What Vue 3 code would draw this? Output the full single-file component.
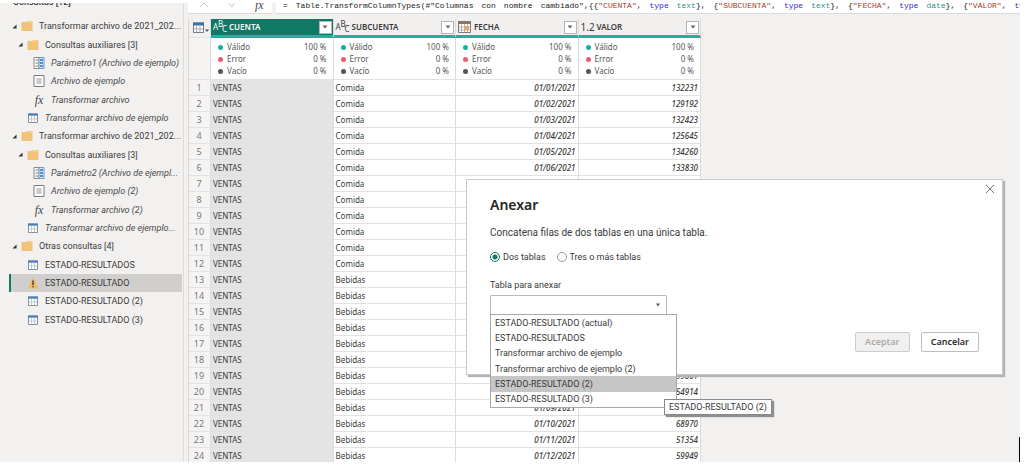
<script setup>
import { ref } from 'vue'

const queries = [
  { kind: 'folder', level: 0, label: 'Transformar archivo de 2021_202...' },
  { kind: 'folder', level: 1, label: 'Consultas auxiliares [3]' },
  { kind: 'param', level: 2, label: 'Parámetro1 (Archivo de ejemplo)', italic: true },
  { kind: 'file', level: 2, label: 'Archivo de ejemplo', italic: true },
  { kind: 'fx', level: 2, label: 'Transformar archivo', italic: true },
  { kind: 'table', level: 1, label: 'Transformar archivo de ejemplo', italic: true },
  { kind: 'folder', level: 0, label: 'Transformar archivo de 2021_202...' },
  { kind: 'folder', level: 1, label: 'Consultas auxiliares [3]' },
  { kind: 'param', level: 2, label: 'Parámetro2 (Archivo de ejempl...', italic: true },
  { kind: 'file', level: 2, label: 'Archivo de ejemplo (2)', italic: true },
  { kind: 'fx', level: 2, label: 'Transformar archivo (2)', italic: true },
  { kind: 'table', level: 1, label: 'Transformar archivo de ejemplo...', italic: true },
  { kind: 'folder', level: 0, label: 'Otras consultas [4]' },
  { kind: 'table', level: 1, label: 'ESTADO-RESULTADOS' },
  { kind: 'warn', level: 1, label: 'ESTADO-RESULTADO', selected: true },
  { kind: 'table', level: 1, label: 'ESTADO-RESULTADO (2)' },
  { kind: 'table', level: 1, label: 'ESTADO-RESULTADO (3)' }
]

const formula = [
  [['=', '']],
  [['Table.TransformColumnTypes(#"Columnas', '']],
  [['con', '']],
  [['nombre', '']],
  [['cambiado",{{', ''], ['"CUENTA"', 'str'], [',', '']],
  [['type', 'kw']],
  [['text', 'ty'], ['},', '']],
  [['{', ''], ['"SUBCUENTA"', 'str'], [',', '']],
  [['type', 'kw']],
  [['text', 'ty'], ['},', '']],
  [['{', ''], ['"FECHA"', 'str'], [',', '']],
  [['type', 'kw']],
  [['date', 'ty'], ['},', '']],
  [['{', ''], ['"VALOR"', 'str'], [',', '']],
  [['type', 'kw']]
]

const columns = [
  { name: 'CUENTA', type: 'abc', selected: true },
  { name: 'SUBCUENTA', type: 'abc' },
  { name: 'FECHA', type: 'date' },
  { name: 'VALOR', type: 'num' }
]

const quality = [
  { label: 'Válido', value: '100 %', tone: 'ok' },
  { label: 'Error', value: '0 %', tone: 'bad' },
  { label: 'Vacío', value: '0 %', tone: 'none' }
]

const values = {
  1: '132231', 2: '129192', 3: '132423', 4: '125645', 5: '134260', 6: '133830',
  19: '99861', 20: '54914', 22: '68970', 23: '51354', 24: '59949'
}
const rows = Array.from({ length: 24 }, (_, i) => {
  const n = i + 1
  const month = String((i % 12) + 1).padStart(2, '0')
  const date = n <= 6 || n >= 21 ? `01/${month}/2021` : ''
  return { n, sub: n <= 12 ? 'Comida' : 'Bebidas', date, value: values[n] || '' }
})

const options = [
  'ESTADO-RESULTADO (actual)',
  'ESTADO-RESULTADOS',
  'Transformar archivo de ejemplo',
  'Transformar archivo de ejemplo (2)',
  'ESTADO-RESULTADO (2)',
  'ESTADO-RESULTADO (3)'
]
const hovered = ref(4)
const mode = ref('two')
const target = ref('')
</script>

<template>
  <div class="screen">
    <div class="workspace">
      <aside class="sidebar">
        <h2 class="side-title">Consultas [12]</h2>
        <ul class="tree">
          <li
            v-for="(q, i) in queries"
            :key="i"
            class="node"
            :class="['level-' + q.level, { italic: q.italic, selected: q.selected }]"
          >
            <svg v-if="q.kind === 'folder'" class="twisty" viewBox="0 0 6 6"><path d="M5.5 0.5V5.5H0.5z" fill="#333" /></svg>
            <svg v-if="q.kind === 'folder'" class="icon" viewBox="0 0 12 12">
              <path d="M0.5 2H5l1-1h5.500V11H.5z" fill="#f0c27a" />
              <path d="M6 2h5" stroke="#f7d79c" stroke-width="1" />
            </svg>
            <svg v-else-if="q.kind === 'param'" class="icon" viewBox="0 0 12 12">
              <path d="M1 .5h5v11H1z" fill="#fff" stroke="#8a8a8a" />
              <path d="M6 .5h5v11H6z" fill="#dbe8f6" stroke="#6d98c8" />
              <path d="M2.500 3H5M2.500 6H5M2.500 9H5" stroke="#777" />
              <path d="M7 3h3M7 6h3M7 9h3" stroke="#2f6db5" stroke-width="1.500" />
            </svg>
            <svg v-else-if="q.kind === 'file'" class="icon" viewBox="0 0 12 12">
              <path d="M1 .5h10v11H1z" fill="#fff" stroke="#7c7c7c" />
              <path d="M3.500 4h5M3.500 6h5M3.500 8h5" stroke="#8b8b8b" stroke-width=".9" />
            </svg>
            <span v-else-if="q.kind === 'fx'" class="icon fx">fx</span>
            <svg v-else-if="q.kind === 'table'" class="icon" viewBox="0 0 12 12">
              <path d="M1.500 2h9v8.500h-9z" fill="#fff" stroke="#8c8c8c" />
              <path d="M4.500 4v6.500M7.500 4v6.500M1.500 7h9" stroke="#a9bfd6" stroke-width=".8" />
              <path d="M1 1.500h10v2.200H1z" fill="#4a7ebb" />
            </svg>
            <svg v-else class="icon" viewBox="0 0 12 12">
              <path d="M6 .5L11.500 11.500H.5z" fill="#f2b96a" />
              <path d="M6 3.500V8M6 9v1.300" stroke="#333" stroke-width="1.300" />
            </svg>
            <a class="label" href="#">{{ q.label }}</a>
          </li>
        </ul>
      </aside>

      <main class="main">
        <div class="formula-bar">
          <div class="formula-tools">
            <svg viewBox="0 0 10 10"><path d="M1 1l8 8M9 1L1 9" fill="none" stroke="#c6c6c6" /></svg>
            <svg viewBox="0 0 10 10"><path d="M1 4l4 5L9 2" fill="none" stroke="#c6c6c6" /></svg>
            <span class="fx">fx</span>
          </div>
          <code class="formula">
            <span v-for="(word, i) in formula" :key="i"><span v-for="(t, j) in word" :key="j" :class="t[1]">{{ t[0] }}</span></span>
          </code>
        </div>

        <table class="grid">
          <colgroup>
            <col class="col-n" />
            <col v-for="c in columns" :key="c.name" class="col-data" />
          </colgroup>
          <thead>
            <tr class="head">
              <th class="corner">
                <button type="button" class="corner-btn" aria-label="Opciones de tabla">
                  <svg viewBox="0 0 16 12">
                    <path d="M.5 1h10v9.500H.5z" fill="#fff" stroke="#777" />
                    <path d="M3.500 4v6.500M7 4v6.500M.5 7h10" stroke="#999" stroke-width=".8" />
                    <path d="M0 .5h11v3H0z" fill="#3f6fae" />
                    <path d="M12 7.500h4l-2 2.500z" fill="#555" />
                  </svg>
                </button>
              </th>
              <th v-for="c in columns" :key="c.name" :class="{ active: c.selected }">
                <div class="head-cell">
                  <span v-if="c.type === 'abc'" class="type abc"><i>A</i><i>B</i><i>C</i></span>
                  <svg v-else-if="c.type === 'date'" class="type" viewBox="0 0 13 12">
                    <path d="M.5 .5h12v11H.5z" fill="#fff" stroke="#777" />
                    <path d="M0 0h13v3H0z" fill="#8a7668" />
                    <path d="M3.500 3v8.500M6.500 3v8.500M9.500 3v8.500M.5 6h12M.5 9h12" stroke="#999" stroke-width=".7" />
                    <path d="M7 5h4v4H7z" fill="#eda553" />
                  </svg>
                  <span v-else class="type num">1.2</span>
                  <span class="name">{{ c.name }}</span>
                  <button type="button" class="filter" :aria-label="'Filtrar ' + c.name">
                    <svg viewBox="0 0 6 4"><path d="M.5 .5h5L3 3.500z" fill="#666" /></svg>
                  </button>
                </div>
              </th>
            </tr>
            <tr class="quality">
              <td class="num-cell"></td>
              <td v-for="c in columns" :key="c.name">
                <div v-for="q in quality" :key="q.label" class="stat">
                  <span class="dot" :class="q.tone"></span><span>{{ q.label }}</span><span class="pct">{{ q.value }}</span>
                </div>
              </td>
            </tr>
          </thead>
          <tbody>
            <tr v-for="r in rows" :key="r.n">
              <td class="num-cell">{{ r.n }}</td>
              <td class="picked">VENTAS</td>
              <td>{{ r.sub }}</td>
              <td class="right">{{ r.date }}</td>
              <td class="right">{{ r.value }}</td>
            </tr>
          </tbody>
        </table>
      </main>
      <span class="caret"></span>
    </div>

    <section class="dialog" role="dialog" aria-labelledby="dlg-title">
      <button type="button" class="close" aria-label="Cerrar">
        <svg viewBox="0 0 10 10"><path d="M1 1l8 8M9 1L1 9" stroke="#777" /></svg>
      </button>
      <h1 id="dlg-title">Anexar</h1>
      <p class="desc">Concatena filas de dos tablas en una única tabla.</p>
      <div class="radios">
        <label><input v-model="mode" type="radio" name="mode" value="two" />Dos tablas</label>
        <label><input v-model="mode" type="radio" name="mode" value="many" />Tres o más tablas</label>
      </div>
      <label class="field-label" for="target">Tabla para anexar</label>
      <div class="picker">
        <select id="target" v-model="target">
          <option value=""></option>
          <option v-for="o in options" :key="o">{{ o }}</option>
        </select>
        <svg class="arrow" viewBox="0 0 6 4"><path d="M1 .5h4L3 3.500z" fill="#555" /></svg>
        <ul class="menu" role="listbox">
          <li
            v-for="(o, i) in options"
            :key="o"
            role="option"
            :class="{ hovered: i === hovered }"
            @mouseenter="hovered = i"
            @click="target = o"
          >{{ o }}</li>
        </ul>
        <span class="tooltip" role="tooltip">{{ options[4] }}</span>
      </div>
      <div class="actions">
        <button type="button" class="btn" disabled>Aceptar</button>
        <button type="button" class="btn">Cancelar</button>
      </div>
    </section>
  </div>
</template>

<style>
body {
  background: #fff;
}
</style>

<style scoped>
* {
  box-sizing: border-box;
}
.screen {
  position: relative;
  height: 100vh;
  overflow: hidden;
  padding: 3px 4px 2px 0;
  font: 9px/12px Roboto, "Noto Sans", sans-serif;
  color: #3a3a3a;
}
ul,
h1,
h2,
p {
  margin: 0;
  padding: 0;
  list-style: none;
}
button {
  font: inherit;
  padding: 0;
  cursor: pointer;
}
.workspace {
  position: relative;
  display: flex;
  height: 100%;
  overflow: hidden;
  background: #f3f1f0;
}
.sidebar {
  flex: none;
  width: 184px;
  border-right: 1px solid #dedcdb;
}
.side-title {
  height: 14px;
  margin-top: -7px;
  padding-left: 13px;
  font-size: 9px;
  line-height: 12px;
  font-weight: 500;
}
.tree {
  display: grid;
  grid-auto-rows: 1fr;
  height: 312px;
  margin: 7px 1px 0 9px;
}
.node {
  display: flex;
  align-items: center;
  white-space: nowrap;
  border-left: 2px solid transparent;
}
.node.level-1 {
  padding-left: 16px;
}
.node.level-2 {
  padding-left: 22px;
}
.node:has(.twisty) {
  padding-left: 1px;
}
.node.level-1:has(.twisty) {
  padding-left: 7px;
}
.node.selected {
  background: #d0cfce;
  border-left-color: #0f7b63;
}
.twisty {
  width: 5px;
  height: 5px;
  margin-right: 4px;
}
.icon {
  flex: none;
  width: 12px;
  height: 12px;
  margin-right: 6px;
}
.fx {
  font: italic 12px/12px "Liberation Serif", serif;
  text-align: center;
  color: #444;
}
.label {
  color: inherit;
  text-decoration: none;
}
.italic .label {
  font-style: italic;
  color: #4a4a4a;
}
.main {
  flex: 1;
  min-width: 0;
  padding-left: 4px;
}
.formula-bar {
  display: flex;
  gap: 4px;
  height: 11px;
  margin-bottom: 5px;
}
.formula-tools {
  display: flex;
  flex: none;
  gap: 18px;
  width: 84px;
  padding-left: 11px;
  background: #fff;
  border-bottom: 1px solid #dedcdb;
}
.formula-tools svg {
  width: 10px;
  height: 10px;
  margin-top: -5px;
}
.formula-tools .fx {
  margin-top: -4px;
  line-height: 12px;
}
.formula {
  display: flex;
  flex: 1;
  min-width: 0;
  gap: 8px;
  overflow: hidden;
  padding-left: 7px;
  background: #fff;
  border-bottom: 1px solid #dedcdb;
  font: 8px/8px "Liberation Mono", monospace;
  white-space: nowrap;
  color: #222;
}
.formula > span {
  margin-top: -1px;
}
.formula .str {
  color: #a33a32;
}
.formula .kw {
  color: #2a2ae0;
}
.formula .ty {
  color: #2a8f83;
}
.grid {
  table-layout: fixed;
  width: 513px;
  border-collapse: separate;
  border-spacing: 0;
  border-left: 1px solid #d8d6d5;
  font: 8px/12px "Noto Sans", sans-serif;
  background: #fff;
}
.col-n {
  width: 22px;
}
.grid th,
.grid td {
  padding: 0 3px 0 2px;
  border-right: 1px solid #dcdcdc;
  border-bottom: 1px solid #e2e2e2;
  text-align: left;
  font-weight: 400;
  white-space: nowrap;
}
.grid td {
  height: 16px;
}
.grid .head th {
  height: 19px;
  padding: 0 1px 0 2px;
  background: #f1f0ef;
  border-bottom: 3px solid #1fb0a0;
}
.grid .head .corner {
  border-bottom: 1px solid #e2e2e2;
}
.grid .head .active {
  background: #117865;
  color: #fff;
}
.corner-btn {
  display: block;
  width: 16px;
  height: 12px;
  margin-left: 2px;
  border: 0;
  background: none;
}
.corner-btn svg {
  display: block;
  width: 16px;
  height: 12px;
}
.head-cell {
  display: flex;
  align-items: center;
  height: 16px;
}
.type {
  flex: none;
  width: 13px;
  height: 12px;
  margin-right: 3px;
}
.abc {
  display: flex;
  align-items: center;
  font-size: 8px;
  line-height: 8px;
}
.abc i {
  flex: none;
  width: 4px;
  font-style: normal;
}
.abc i:first-child {
  width: 5px;
}
.abc i:nth-child(2) {
  align-self: flex-start;
  margin-top: -1px;
}
.abc i:nth-child(3) {
  align-self: flex-end;
}
.num {
  font-size: 10px;
  line-height: 12px;
}
.name {
  font-weight: 600;
}
.filter {
  display: grid;
  place-items: center;
  width: 13px;
  height: 13px;
  margin-left: auto;
  border: 1px solid #b5b5b5;
  background: #fff;
}
.filter svg {
  width: 6px;
  height: 4px;
}
.grid .quality td {
  height: 42px;
  padding: 3px 6px 2px 7px;
}
.stat {
  display: flex;
  align-items: center;
  color: #555;
}
.dot {
  width: 5px;
  height: 5px;
  margin-right: 4px;
  border-radius: 50%;
}
.ok {
  background: #12b29c;
}
.bad {
  background: #f0596a;
}
.none {
  background: #555;
}
.pct {
  margin-left: auto;
}
.grid td.num-cell {
  background: #f5f4f3;
  color: #777;
  font-size: 9px;
  text-align: center;
}
.grid td.picked {
  background: #e4e4e4;
}
.grid td.right {
  padding-right: 2px;
  text-align: right;
  font-style: italic;
  font-weight: 500;
}
.caret {
  position: absolute;
  right: 0;
  bottom: 0;
  width: 1px;
  height: 25px;
  background: #000;
}
.dialog {
  position: absolute;
  top: 179px;
  left: 466px;
  right: 21px;
  padding: 16px 23px 22px;
  background: #fff;
  border: 1px solid #c8c8c8;
  box-shadow: 2px 2px 1px #b4b4b4;
}
.close {
  position: absolute;
  top: 4px;
  right: 7px;
  width: 10px;
  height: 10px;
  border: 0;
  background: none;
}
.close svg {
  display: block;
}
h1 {
  font: 600 14px/18px "Noto Sans", sans-serif;
  color: #252525;
}
.desc {
  margin-top: 13px;
  font-size: 10px;
}
.radios {
  display: flex;
  gap: 11px;
  margin-top: 12px;
}
.radios label {
  display: flex;
  align-items: center;
  gap: 3px;
}
.radios input {
  appearance: none;
  width: 10px;
  height: 10px;
  margin: 0;
  border: 1px solid #999;
  border-radius: 50%;
  background: #fff;
}
.radios input:checked {
  border-color: #117865;
  background: radial-gradient(#117865 0 2px, #fff 3px);
}
.field-label {
  display: block;
  margin-top: 16px;
}
.picker {
  position: relative;
  width: 177px;
  margin-top: 4px;
}
.picker select {
  display: block;
  appearance: none;
  width: 100%;
  height: 20px;
  border: 1px solid #b9b9b9;
  border-radius: 1px;
  background: #fff;
  font: inherit;
}
.arrow {
  position: absolute;
  top: 8px;
  right: 6px;
  width: 6px;
  height: 4px;
}
.menu {
  position: absolute;
  z-index: 1;
  top: 19px;
  left: 0;
  display: grid;
  grid-auto-rows: 1fr;
  width: 187px;
  height: 94px;
  border: 1px solid #a8a8a8;
  background: #fff;
}
.menu li {
  display: flex;
  align-items: center;
  padding-left: 4px;
}
.menu .hovered {
  background: #c6c6c6;
}
.tooltip {
  position: absolute;
  z-index: 2;
  top: 104px;
  left: 174px;
  padding: 1px 4px;
  border: 1px solid #888;
  background: #fff;
  box-shadow: 2px 2px 1px #8f8f8f;
  white-space: nowrap;
}
.actions {
  display: flex;
  justify-content: flex-end;
  gap: 11px;
  margin-top: 17px;
}
.btn {
  min-width: 55px;
  height: 20px;
  padding: 0 9px;
  border: 1px solid #bdbdbd;
  border-radius: 2px;
  background: #fff;
  font-family: "Noto Sans", sans-serif;
  font-weight: 600;
  color: #2c2c2c;
}
.btn:disabled {
  background: #f1f0ef;
  color: #aaa;
  border-color: #ccc;
}
</style>
